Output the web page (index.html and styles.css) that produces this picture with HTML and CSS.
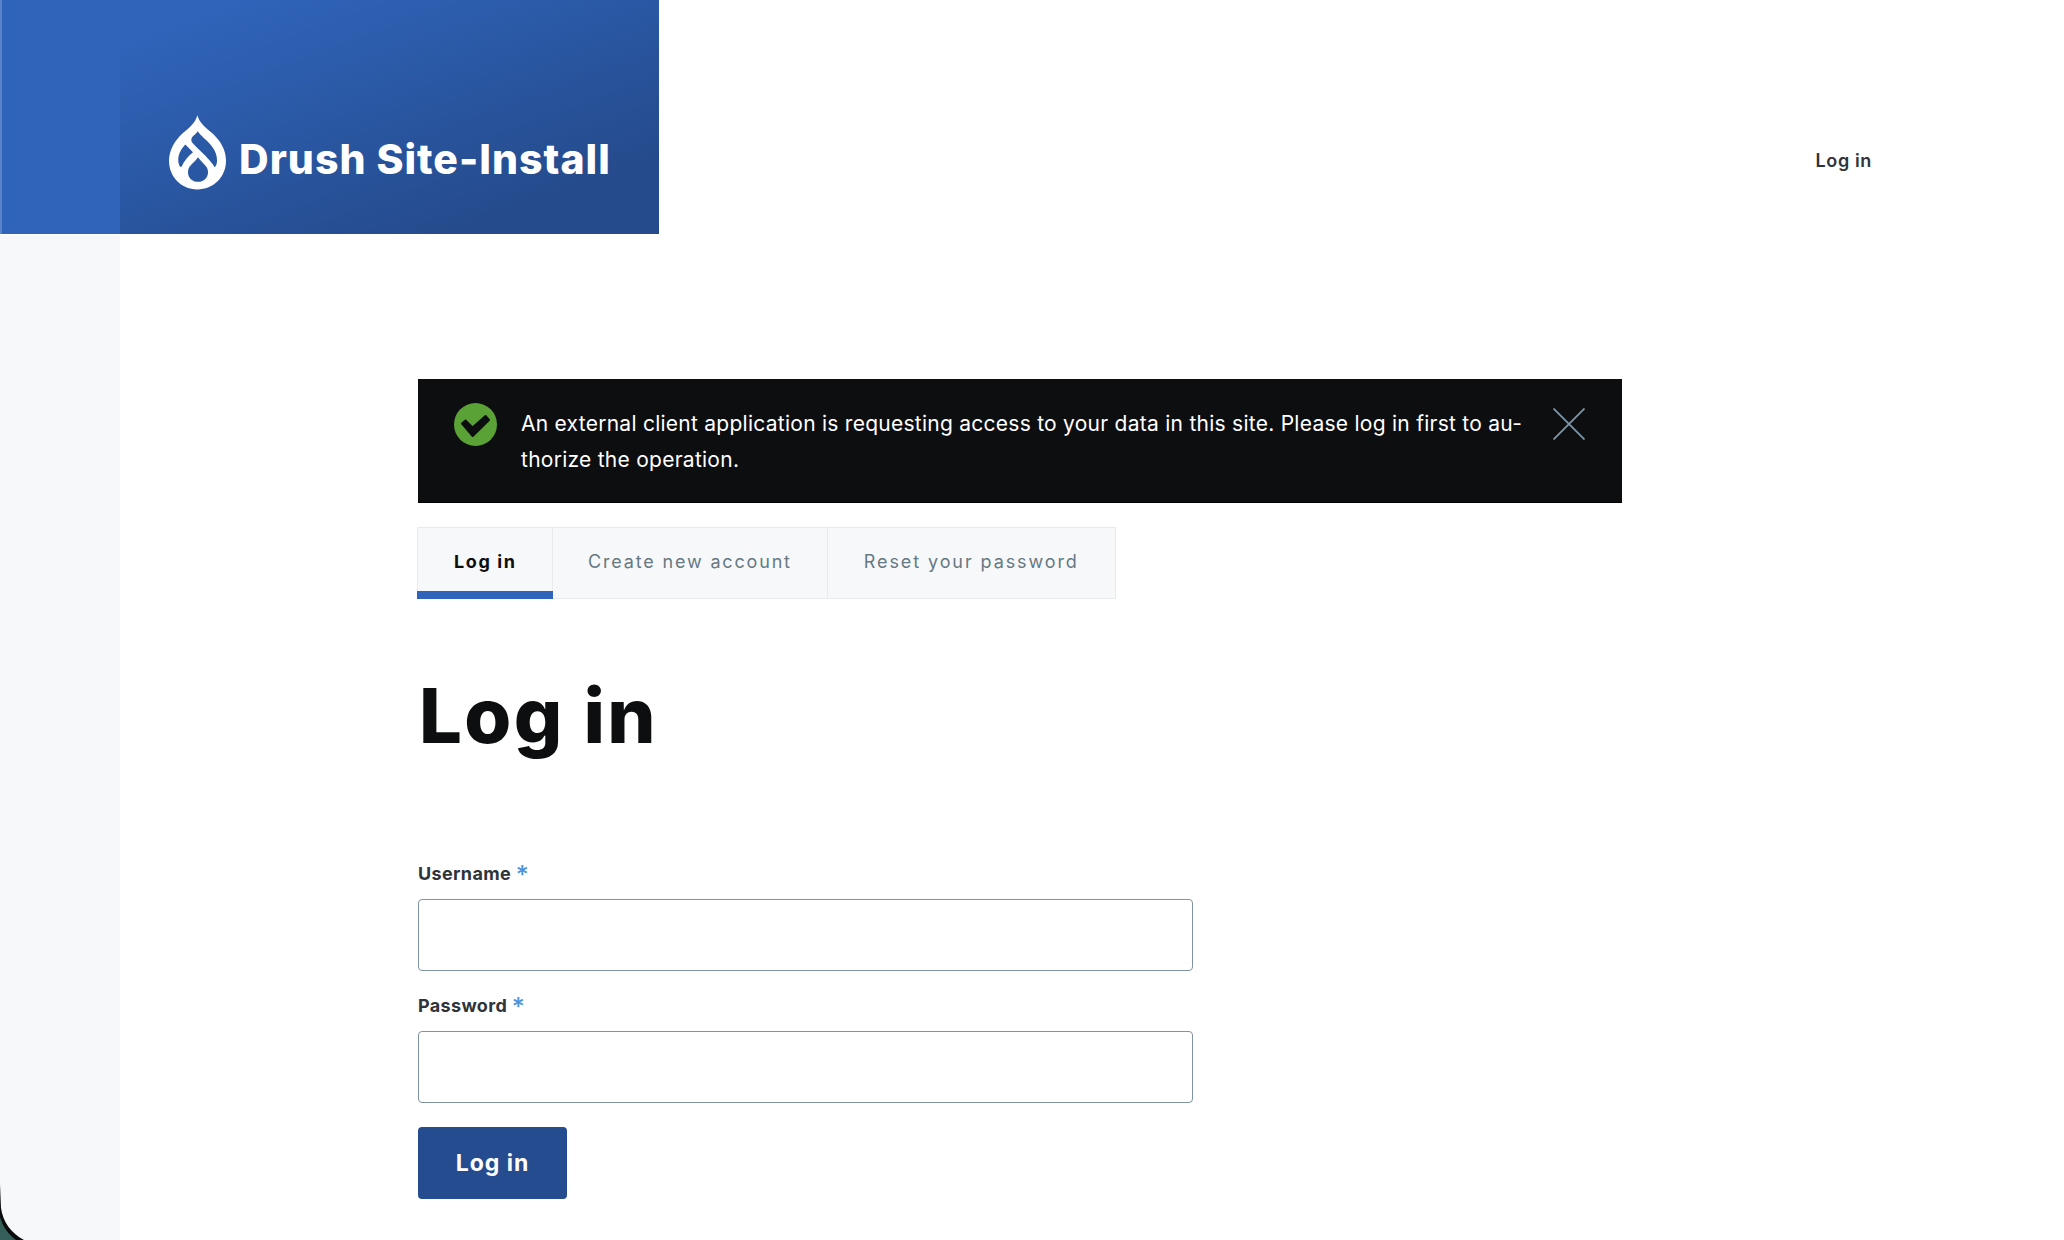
FILE: index.html
```
<!DOCTYPE html>
<html lang="en">
<head>
    <meta charset="utf-8">
    <title>Log in | Drush Site-Install</title>
    <link rel="stylesheet" href="styles.css">
</head>
<body>
<header class="site-header">
    <div class="social-top"></div>
    <a class="branding" href="#">
        <svg class="logo" viewBox="57 46 171 224">
            <path fill="#fff" fill-rule="evenodd" d="M142 46C150 72 168 84 188 101C212 124 228 150 228 183C228 232 190 269 142 269C95 269 57 232 57 183C57 150 75 122 97 101C117 84 136 70 142 46Z
                M143 94C148 101 158 111 170 122C190 141 201 160 201 181C201 190 199 198 194 202C188 192 175 177 160 162C148 150 135 139 127 129C122 122 123 115 130 108C136 103 140 99 143 94Z
                M106 134L129 157C115 168 102 183 95 200C93 203 90 201 88 197C80 175 87 154 106 134Z
                M144 172C150 181 162 191 169 201C174 208 174 214 174 217C174 234 161 246 144 246C127 246 114 234 114 217C114 210 116 204 120 199C127 190 137 182 144 172Z"/>
        </svg>
        <span class="site-name">Drush Site-Install</span>
    </a>
    <nav class="user-menu"><a href="#">Log in</a></nav>
</header>

<div class="page">
    <aside class="social-bar"></aside>
    <main class="main">
        <!-- Status message -->
        <div class="message">
            <svg class="message-icon" viewBox="0 0 43 43">
                <circle cx="21.5" cy="21.5" r="21.5" fill="#5aa136"/>
                <path d="M8 20.5L11.5 17.5L18.5 24.5L31.5 13L35 17L18.7 33Z" fill="#0d0e10" stroke="#0d0e10" stroke-width="2" stroke-linejoin="round"/>
            </svg>
            <div class="message-text">An external client application is requesting access to your data in this site. Please log in first to au-<br>thorize the operation.</div>
            <svg class="message-close" viewBox="0 0 32 32">
                <path d="M0.5 0.5L31.5 31.5M31.5 0.5L0.5 31.5" stroke="#7e96a7" stroke-width="1.8"/>
            </svg>
        </div>

        <!-- Tabs -->
        <div class="tabs">
            <a class="tab active" href="#">Log in</a>
            <a class="tab" href="#">Create new account</a>
            <a class="tab" href="#">Reset your password</a>
        </div>

        <h1>Log in</h1>

        <form class="login-form">
            <label for="name">Username <span class="required">*</span></label>
            <input type="text" id="name">
            <label for="pass">Password <span class="required">*</span></label>
            <input type="password" id="pass">
            <button type="button">Log in</button>
        </form>
    </main>
</div>

<!-- Rounded window corner -->
<svg class="window-corner" viewBox="0 0 24 56">
    <path d="M0 0C0.4 8 0.6 16 1 24C3 38 11 49 24 56H0Z" fill="#0b0d0d"/>
    <path d="M0 33C3 43 8 50 16 56H0Z" fill="#35605a"/>
</svg>
</body>
</html>
```
FILE: styles.css
```
* {
    box-sizing: border-box;
}
body {
    margin: 0;
    height: 1240px;
    overflow: hidden;
    font-family: Inter, sans-serif;
    color: #2e3439;
    background-color: #fff;
}
a {
    color: inherit;
    text-decoration: none;
}
.site-header {
    display: flex;
    height: 234px;
}
.social-top {
    width: 120px;
    background-color: #2f64ba;
    border-left: 2px solid #5883c8;
}
.branding {
    display: flex;
    align-items: flex-start;
    width: 539px;
    padding: 115px 0 0 49px;
    color: #fff;
    background-image: linear-gradient(160deg, #2f64ba 10%, #254b8c 82%);
}
.logo {
    width: 57px;
    height: 75px;
}
.site-name {
    margin: 19px 0 0 13px;
    font-size: 41px;
    font-weight: 800;
    line-height: 50px;
    letter-spacing: 1px;
    white-space: nowrap;
}
.user-menu {
    margin-left: auto;
    padding: 148px 192px 0 0;
    font-size: 18px;
    font-weight: 600;
    line-height: 25px;
    letter-spacing: 0.65px;
}
.page {
    display: flex;
    height: 1006px;
}
.social-bar {
    width: 120px;
    background-color: #f7f8fa;
    border-top: 1px solid #fff;
}
.main {
    width: 1204px;
    margin: 145px 0 0 298px;
}
.message {
    display: flex;
    align-items: flex-start;
    height: 124px;
    padding: 26px 37px 0 36px;
    color: #fff;
    background-color: #0d0e10;
    border-bottom: 1px solid #000;
}
.message-icon {
    flex: none;
    width: 43px;
    height: 43px;
    margin-top: -2px;
}
.message-text {
    margin: 1px 0 0 24px;
    font-size: 21px;
    line-height: 36px;
    letter-spacing: 0.26px;
    white-space: nowrap;
}
.message-close {
    flex: none;
    width: 32px;
    height: 32px;
    margin: 3px 0 0 auto;
}
.tabs {
    display: flex;
    width: 699px;
    height: 72px;
    margin: 24px 0 0 -1px;
    background-color: #f7f8fa;
    border: 1px solid #e7ebee;
}
.tab {
    padding: 0 35px;
    border-right: 1px solid #e7ebee;
    font-size: 18px;
    line-height: 68px;
    letter-spacing: 1.83px;
    color: #667983;
    white-space: nowrap;
}
.tab:last-child {
    padding-left: 36px;
    border-right: 0;
    letter-spacing: 1.9px;
}
.tab.active {
    width: 136px;
    height: 72px;
    margin: -1px 0 -1px -1px;
    padding: 1px 0 0 37px;
    border-right: 0;
    background: linear-gradient(#2f64ba, #2f64ba) bottom / 100% 8px no-repeat, linear-gradient(#e7ebee, #e7ebee) right / 1px 100% no-repeat;
    font-weight: 700;
    letter-spacing: 1.6px;
    color: #0d0e10;
}
h1 {
    margin: 66px 0 0 1px;
    font-size: 76px;
    font-weight: 800;
    line-height: 100px;
    letter-spacing: 2.3px;
    color: #0d0e10;
}
.login-form {
    display: flex;
    flex-direction: column;
    align-items: flex-start;
    margin-top: 96px;
}
label {
    height: 38px;
    font-size: 18px;
    font-weight: 700;
    line-height: 25px;
    letter-spacing: 0.35px;
}
.required {
    font-size: 25px;
    font-weight: 500;
    line-height: 1;
    vertical-align: -4px;
    color: #4a93dc;
}
input {
    width: 775px;
    height: 72px;
    margin-bottom: 22px;
    padding: 0 18px;
    border: 1px solid #8093a0;
    border-radius: 4px;
    background-color: #fff;
    font: 21px Inter, sans-serif;
}
button {
    width: 149px;
    height: 72px;
    margin-top: 2px;
    padding: 0;
    border: 0;
    border-radius: 4px;
    color: #fff;
    background-color: #254c8f;
    font: 700 23px Inter, sans-serif;
    letter-spacing: 1px;
}
.window-corner {
    position: absolute;
    left: 0;
    bottom: 0;
    width: 24px;
    height: 56px;
}
```
